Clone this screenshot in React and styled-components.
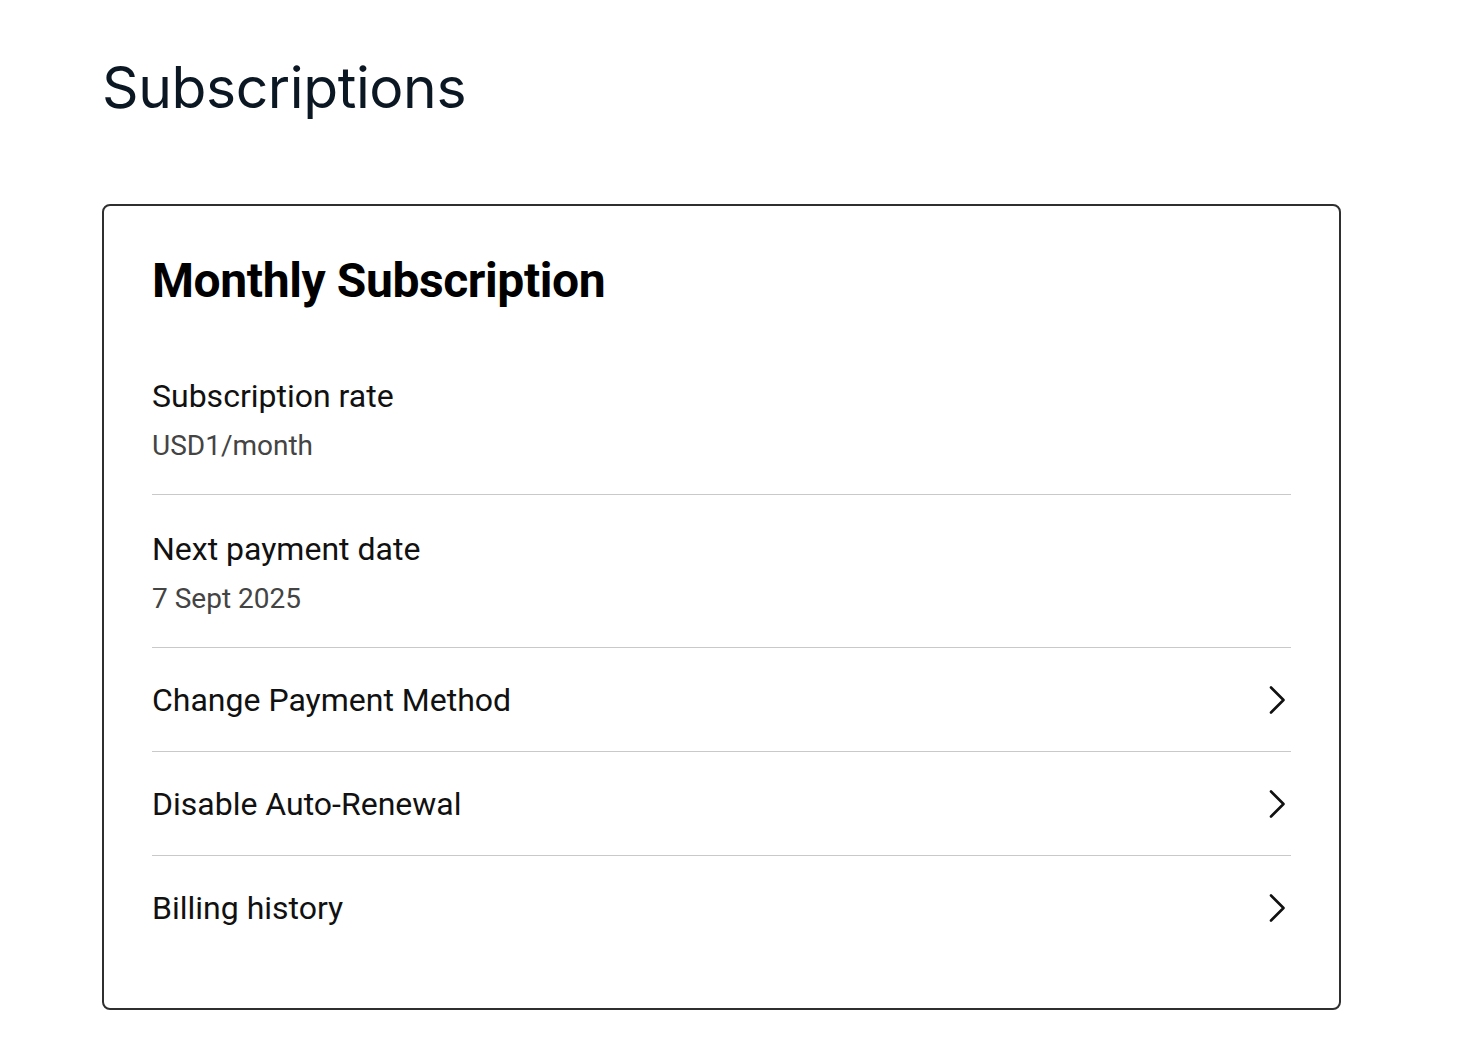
import React from 'react';
import styled, { createGlobalStyle } from 'styled-components';

const GlobalStyle = createGlobalStyle`
  body {
    margin: 0;
    background: #ffffff;
    font-family: Roboto, "Liberation Sans", sans-serif;
  }
`;

const Page = styled.div`
  padding: 48px 141px 40px 102px;
`;

const PageTitle = styled.h1`
  margin: 0 0 76px;
  font-family: Inter, "Liberation Sans", sans-serif;
  font-size: 57px;
  font-weight: 400;
  line-height: 80px;
  letter-spacing: -0.4px;
  color: #0b1722;
`;

const Card = styled.section`
  border: 2px solid #2f2f2f;
  border-radius: 8px;
  padding: 47px 48px 49px;
`;

const CardTitle = styled.h2`
  margin: 0 0 33px;
  font-size: 48px;
  font-weight: 700;
  line-height: 56px;
  letter-spacing: -0.4px;
  color: #000000;
`;

const List = styled.div`
  display: flex;
  flex-direction: column;
`;

const Row = styled.div`
  display: flex;
  align-items: center;
  justify-content: space-between;
  padding: ${(p) => (p.$info ? '34px 0 28px' : '32px 0 31px')};
  border-bottom: 1px solid #c9c9c9;
  cursor: ${(p) => (p.$info ? 'default' : 'pointer')};

  &:last-child {
    border-bottom: none;
  }
`;

const Info = styled.div`
  display: flex;
  flex-direction: column;
  gap: 10px;
`;

const Label = styled.div`
  font-size: 32px;
  line-height: 40px;
  color: #111111;
`;

const Value = styled.div`
  font-size: 28px;
  line-height: 40px;
  color: #444444;
`;

const Chevron = styled.svg`
  width: 18px;
  height: 30px;
  margin-right: 5px;
  flex-shrink: 0;
`;

const ChevronIcon = () => (
  <Chevron viewBox="0 0 18 30" fill="none">
    <path d="M3 2.5 L15.5 15 L3 27.5" stroke="#111" strokeWidth="2.6" strokeLinecap="round" strokeLinejoin="round" />
  </Chevron>
);

const info = [
  { label: 'Subscription rate', value: 'USD1/month' },
  { label: 'Next payment date', value: '7 Sept 2025' },
];

const links = ['Change Payment Method', 'Disable Auto-Renewal', 'Billing history'];

const App = () => (
  <>
    <GlobalStyle />
    <Page>
      <PageTitle>Subscriptions</PageTitle>
      <Card>
        <CardTitle>Monthly Subscription</CardTitle>
        <List>
          {info.map((item) => (
            <Row key={item.label} $info>
              <Info>
                <Label>{item.label}</Label>
                <Value>{item.value}</Value>
              </Info>
            </Row>
          ))}
          {links.map((text) => (
            <Row key={text}>
              <Label>{text}</Label>
              <ChevronIcon />
            </Row>
          ))}
        </List>
      </Card>
    </Page>
  </>
);

export default App;
